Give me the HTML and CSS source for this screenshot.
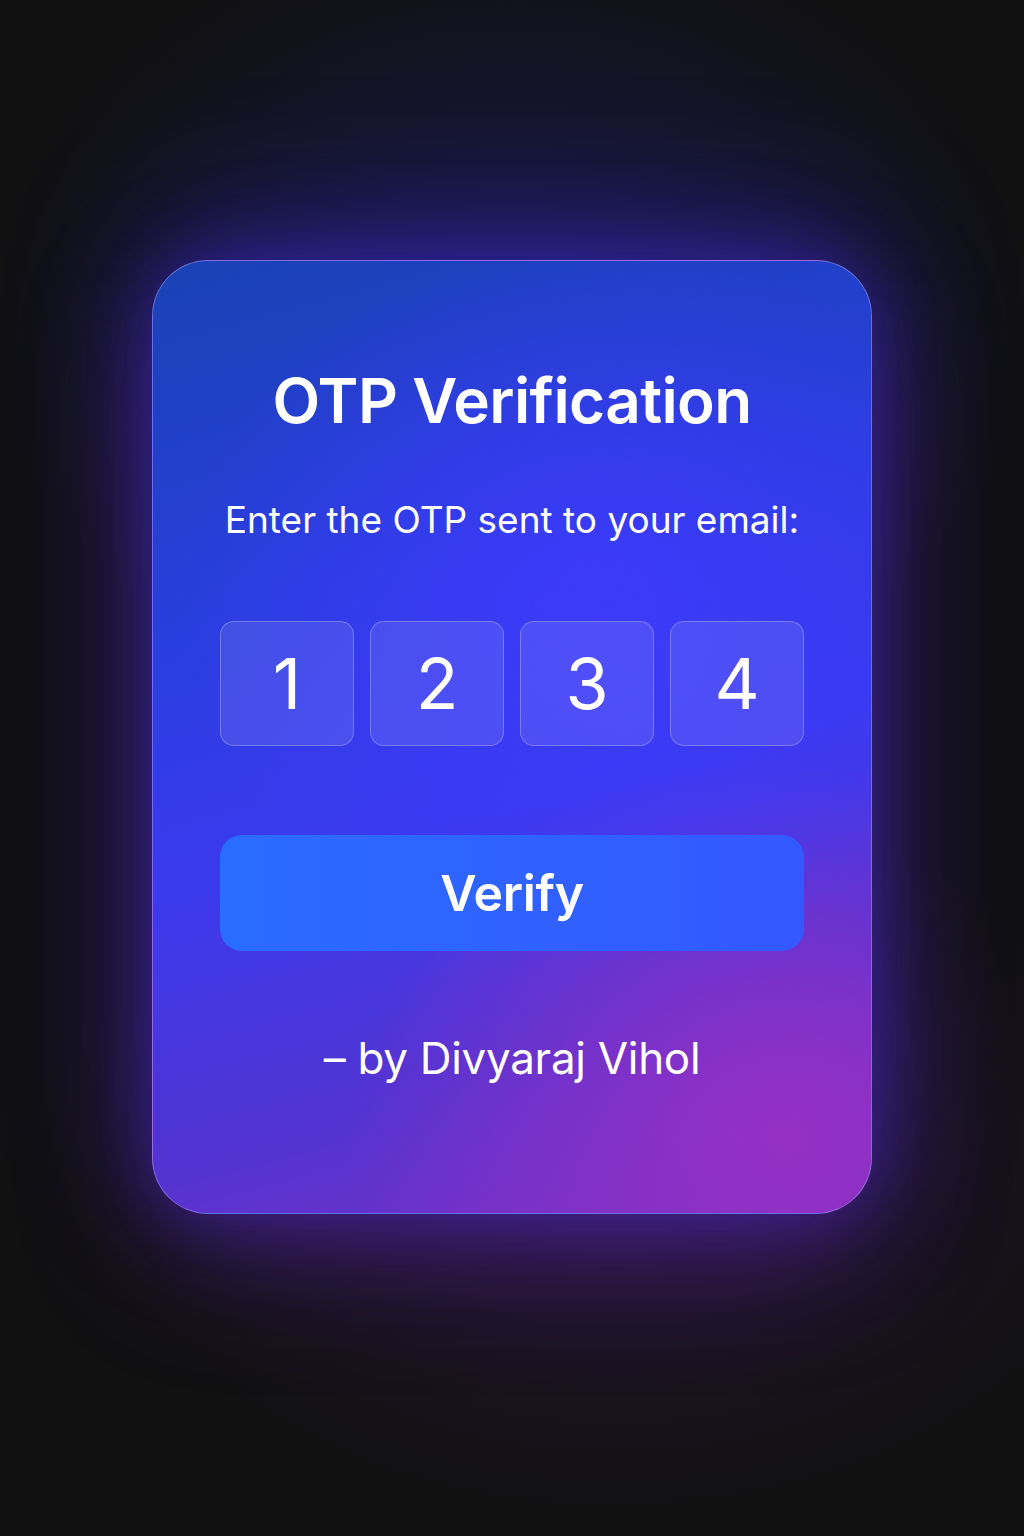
FILE: index.html
```html
<!DOCTYPE html>
<html lang="en">
<head>
<meta charset="utf-8">
<title>OTP Verification</title>
<link rel="stylesheet" href="styles.css">
</head>
<body>
<main class="stage">
  <section class="card">
    <h1 class="title">OTP Verification</h1>
    <p class="subtitle">Enter the OTP sent to your email:</p>
    <div class="otp-row">
      <div class="otp-box">1</div>
      <div class="otp-box">2</div>
      <div class="otp-box">3</div>
      <div class="otp-box">4</div>
    </div>
    <button class="verify-btn">Verify</button>
    <p class="credit">– by Divyaraj Vihol</p>
  </section>
</main>
</body>
</html>
```
FILE: styles.css
```css
* { box-sizing: border-box; }
html, body {
  margin: 0;
  height: 100%;
  background: #111112;
}
body {
  font-family: Inter, "Noto Sans", "Liberation Sans", sans-serif;
  color: #fff;
}
.stage {
  min-height: 1536px;
  display: flex;
  justify-content: center;
  align-items: flex-start;
  padding-top: 260px;
  background:
    radial-gradient(ellipse 520px 400px at 50% 320px, rgba(40,40,170,0.35), rgba(40,40,170,0) 100%),
    radial-gradient(ellipse 520px 360px at 60% 1150px, rgba(120,40,180,0.22), rgba(120,40,180,0) 100%),
    #111112;
}
.card {
  width: 720px;
  height: 954px;
  border-radius: 56px;
  border: 1px solid rgba(170,160,255,0.5);
  padding: 100px 67px 0;
  display: flex;
  flex-direction: column;
  align-items: stretch;
  background:
    radial-gradient(ellipse 420px 360px at 62% 36%, rgba(62,58,252,0.95), rgba(62,58,252,0) 100%),
    radial-gradient(ellipse 440px 380px at 88% 92%, rgba(150,48,196,1), rgba(150,48,196,0) 100%),
    linear-gradient(165deg, #1a42b4 0%, #2a3ee0 35%, #3a3aee 55%, #5034d2 78%, #7a30c4 100%);
  box-shadow:
    0 -30px 140px rgba(50,45,210,0.45),
    0 40px 130px rgba(130,40,200,0.35),
    0 0 60px rgba(60,40,220,0.35);
}
.title {
  margin: 0;
  font-size: 62px;
  line-height: 80px;
  font-weight: 600;
  text-align: center;
  letter-spacing: -0.6px;
}
.subtitle {
  margin: 54px 0 0;
  font-size: 37px;
  line-height: 50px;
  font-weight: 400;
  text-align: center;
  letter-spacing: 0;
}
.otp-row {
  margin-top: 76px;
  display: grid;
  grid-template-columns: repeat(4, 1fr);
  gap: 16px;
}
.otp-box {
  height: 125px;
  border-radius: 14px;
  background: rgba(255,255,255,0.10);
  border: 1.5px solid rgba(255,255,255,0.25);
  display: flex;
  align-items: center;
  justify-content: center;
  font-size: 70px;
  font-weight: 400;
  line-height: 1;
}
.verify-btn {
  margin-top: 89px;
  height: 116px;
  border: none;
  border-radius: 22px;
  background: linear-gradient(90deg, #2a6cff 0%, #3458ff 100%);
  color: #fff;
  font-family: inherit;
  font-size: 50px;
  font-weight: 600;
  letter-spacing: -0.3px;
}
.credit {
  margin: 77px 0 0;
  font-size: 44px;
  line-height: 60px;
  text-align: center;
  font-weight: 400;
  letter-spacing: -0.3px;
}
```
